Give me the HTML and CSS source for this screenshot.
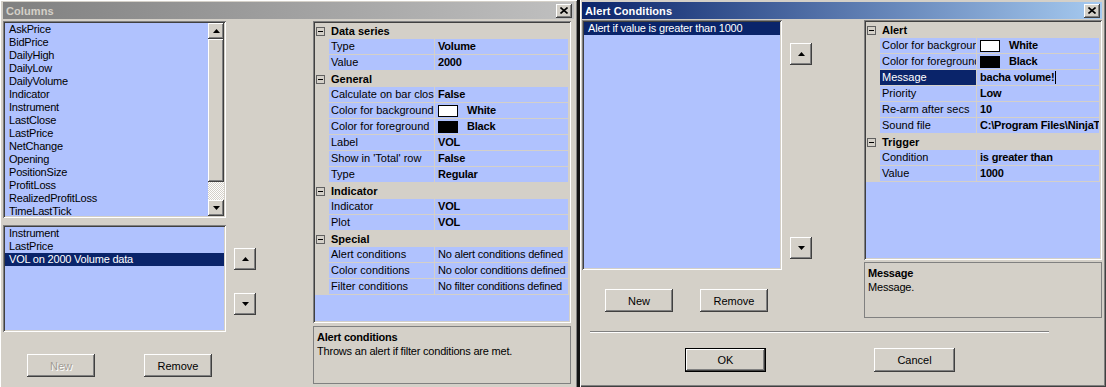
FILE: index.html
```html
<!DOCTYPE html>
<html>
<head>
<meta charset="utf-8">
<link rel="stylesheet" href="styles.css">
</head>
<body>
<div class="screen">
  <div class="win win-left">
    <div class="titlebar inactive">
      <span class="title">Columns</span>
      <div class="close"><svg width="8" height="7" viewBox="0 0 8 7"><path d="M0.5 0.5 L7.5 6.5 M7.5 0.5 L0.5 6.5" stroke="#000" stroke-width="1.6"/></svg></div>
    </div>
    <div class="body-left">
      <div class="col-lists">
        <div class="listbox list-top">
          <ul class="items">
            <li>AskPrice</li><li>BidPrice</li><li>DailyHigh</li><li>DailyLow</li><li>DailyVolume</li>
            <li>Indicator</li><li>Instrument</li><li>LastClose</li><li>LastPrice</li><li>NetChange</li>
            <li>Opening</li><li>PositionSize</li><li>ProfitLoss</li><li>RealizedProfitLoss</li><li>TimeLastTick</li>
          </ul>
          <div class="vscroll">
            <div class="sbtn"><svg width="7" height="4" viewBox="0 0 7 4"><path d="M3.5 0 L7 4 L0 4 Z" fill="#000"/></svg></div>
            <div class="thumb"></div>
            <div class="track"></div>
            <div class="sbtn"><svg width="7" height="4" viewBox="0 0 7 4"><path d="M0 0 L7 0 L3.5 4 Z" fill="#000"/></svg></div>
          </div>
        </div>
        <div class="listbox list-bottom">
          <ul class="items">
            <li>Instrument</li><li>LastPrice</li><li class="sel">VOL on 2000 Volume data</li>
          </ul>
        </div>
        <div class="btn-row left-btns">
          <div class="btn disabled">New</div>
          <div class="btn">Remove</div>
        </div>
      </div>
      <div class="arrows left-arrows">
        <div class="arrow up"><svg width="7" height="4" viewBox="0 0 7 4"><path d="M3.5 0 L7 4 L0 4 Z" fill="#000"/></svg></div>
        <div class="arrow down"><svg width="7" height="4" viewBox="0 0 7 4"><path d="M0 0 L7 0 L3.5 4 Z" fill="#000"/></svg></div>
      </div>
      <div class="gridcol left-gridcol">
        <div class="pgrid left-grid">
          <div class="pcat"><span class="exp"></span><span>Data series</span></div>
          <div class="prow"><i></i><div class="n">Type</div><div class="v b">Volume</div></div>
          <div class="prow"><i></i><div class="n">Value</div><div class="v b">2000</div></div>
          <div class="pcat"><span class="exp"></span><span>General</span></div>
          <div class="prow"><i></i><div class="n">Calculate on bar close</div><div class="v b">False</div></div>
          <div class="prow"><i></i><div class="n">Color for background</div><div class="v b"><span class="swatch white"></span><span class="swtxt">White</span></div></div>
          <div class="prow"><i></i><div class="n">Color for foreground</div><div class="v b"><span class="swatch black"></span><span class="swtxt">Black</span></div></div>
          <div class="prow"><i></i><div class="n">Label</div><div class="v b">VOL</div></div>
          <div class="prow"><i></i><div class="n">Show in 'Total' row</div><div class="v b">False</div></div>
          <div class="prow"><i></i><div class="n">Type</div><div class="v b">Regular</div></div>
          <div class="pcat"><span class="exp"></span><span>Indicator</span></div>
          <div class="prow"><i></i><div class="n">Indicator</div><div class="v b">VOL</div></div>
          <div class="prow"><i></i><div class="n">Plot</div><div class="v b">VOL</div></div>
          <div class="pcat"><span class="exp"></span><span>Special</span></div>
          <div class="prow"><i></i><div class="n">Alert conditions</div><div class="v">No alert conditions defined</div></div>
          <div class="prow"><i></i><div class="n">Color conditions</div><div class="v">No color conditions defined</div></div>
          <div class="prow"><i></i><div class="n">Filter conditions</div><div class="v">No filter conditions defined</div></div>
        </div>
        <div class="desc left-desc">
          <div class="dtitle">Alert conditions</div>
          <div>Throws an alert if filter conditions are met.</div>
        </div>
      </div>
    </div>
  </div>
  <div class="divider"></div>
  <div class="win win-right">
    <div class="titlebar active">
      <span class="title">Alert Conditions</span>
      <div class="close"><svg width="8" height="7" viewBox="0 0 8 7"><path d="M0.5 0.5 L7.5 6.5 M7.5 0.5 L0.5 6.5" stroke="#000" stroke-width="1.6"/></svg></div>
    </div>
    <div class="body-right">
      <div class="rtop">
        <div class="rcol1">
          <div class="listbox rlist">
            <ul class="items">
              <li class="sel">Alert if value is greater than 1000</li>
            </ul>
          </div>
          <div class="btn-row right-btns">
            <div class="btn">New</div>
            <div class="btn">Remove</div>
          </div>
        </div>
        <div class="arrows right-arrows">
          <div class="arrow up"><svg width="7" height="4" viewBox="0 0 7 4"><path d="M3.5 0 L7 4 L0 4 Z" fill="#000"/></svg></div>
          <div class="arrow down"><svg width="7" height="4" viewBox="0 0 7 4"><path d="M0 0 L7 0 L3.5 4 Z" fill="#000"/></svg></div>
        </div>
        <div class="gridcol right-gridcol">
          <div class="pgrid right-grid">
            <div class="pcat"><span class="exp"></span><span>Alert</span></div>
            <div class="prow"><i></i><div class="n">Color for background</div><div class="v b"><span class="swatch white"></span><span class="swtxt">White</span></div></div>
            <div class="prow"><i></i><div class="n">Color for foreground</div><div class="v b"><span class="swatch black"></span><span class="swtxt">Black</span></div></div>
            <div class="prow"><i></i><div class="n selname">Message</div><div class="v b">bacha volume!<span class="caret"></span></div></div>
            <div class="prow"><i></i><div class="n">Priority</div><div class="v b">Low</div></div>
            <div class="prow"><i></i><div class="n">Re-arm after secs</div><div class="v b">10</div></div>
            <div class="prow"><i></i><div class="n">Sound file</div><div class="v b">C:\Program Files\NinjaTrader 6\sounds\Alert1.wav</div></div>
            <div class="pcat"><span class="exp"></span><span>Trigger</span></div>
            <div class="prow"><i></i><div class="n">Condition</div><div class="v b">is greater than</div></div>
            <div class="prow"><i></i><div class="n">Value</div><div class="v b">1000</div></div>
          </div>
          <div class="desc right-desc">
            <div class="dtitle">Message</div>
            <div>Message.</div>
          </div>
        </div>
      </div>
      <div class="sep"></div>
      <div class="okrow">
        <div class="btn wide default">OK</div>
        <div class="btn wide">Cancel</div>
      </div>
    </div>
  </div>
</div>
</body>
</html>
```

FILE: styles.css
```css
* { box-sizing: border-box; margin: 0; padding: 0; }
body {
  margin: 0;
  width: 1106px;
  height: 387px;
  overflow: hidden;
  font-family: "Liberation Sans", Arial, sans-serif;
  font-size: 11px;
  color: #000;
  background: #000;
}
ul { list-style: none; }
.screen { display: flex; height: 387px; }

.win {
  background: #d4d0c8;
  height: 387px;
  display: flex;
  flex-direction: column;
}
.win-left {
  width: 577px;
  padding: 2px 3px 0 3px;
  box-shadow: inset 1px 1px #ffffff, inset -1px 0 #808080;
}
.divider { width: 3px; background: #141414; }
.win-right {
  width: 526px;
  padding: 2px 4px 0 2px;
  box-shadow: inset 1px 0 #ffffff, inset -1px -1px #404040, inset -2px -2px #808080;
}

.titlebar {
  height: 17px;
  display: flex;
  align-items: center;
  justify-content: space-between;
  padding: 0 2px 0 3px;
  font-weight: bold;
  font-size: 11px;
  flex: none;
}
.titlebar.inactive { background: linear-gradient(to right, #808080, #c0c0c0); color: #d4d0c8; }
.titlebar.active { background: linear-gradient(to right, #0a246a, #a6caf0); color: #ffffff; }
.titlebar .title { letter-spacing: 0.1px; }
.close {
  width: 16px;
  height: 14px;
  background: #d4d0c8;
  display: flex;
  align-items: center;
  justify-content: center;
  box-shadow: inset -1px -1px #404040, inset 1px 1px #ffffff, inset -2px -2px #808080;
}

/* raised / sunken */
.btn, .arrow, .sbtn, .thumb {
  background: #d4d0c8;
  box-shadow: inset -1px -1px #404040, inset 1px 1px #ffffff, inset -2px -2px #808080, inset 2px 2px #d4d0c8;
}
.listbox {
  background: #b0c2fe;
  padding: 2px;
  box-shadow: inset 1px 1px #808080, inset -1px -1px #ffffff, inset 2px 2px #404040, inset -2px -2px #d4d0c8;
}
.items li {
  height: 13px;
  line-height: 13px;
  padding-left: 4px;
  white-space: nowrap;
  letter-spacing: -0.2px;
}
.items li.sel { background: #0a246a; color: #ffffff; }

/* left window */
.body-left { display: flex; margin-top: 2px; flex: 1; }
.col-lists { width: 223px; display: flex; flex-direction: column; }
.list-top { height: 197px; display: flex; }
.list-top .items { flex: 1; }
.vscroll { width: 16px; display: flex; flex-direction: column; }
.sbtn { height: 16px; display: flex; align-items: center; justify-content: center; }
.thumb { height: 143px; }
.track {
  flex: 1;
  background-color: #d4d0c8;
  background-image: conic-gradient(#ffffff 25%, #d4d0c8 0 50%, #ffffff 0 75%, #d4d0c8 0);
  background-size: 2px 2px;
}
.list-bottom { height: 107px; margin-top: 7px; }

.btn-row { display: flex; }
.btn {
  width: 68px;
  height: 23px;
  display: flex;
  align-items: center;
  justify-content: center;
}
.btn.disabled { color: #a09c94; text-shadow: 1px 1px #ffffff; }
.left-btns { margin-top: 22px; }
.left-btns .btn:first-child { margin-left: 24px; }
.left-btns .btn + .btn { margin-left: 49px; }

.arrows { width: 22px; margin-left: 8px; display: flex; flex-direction: column; flex: none; }
.arrow { width: 22px; height: 22px; display: flex; align-items: center; justify-content: center; }
.left-arrows .up { margin-top: 227px; }
.left-arrows .down { margin-top: 23px; }

.gridcol { display: flex; flex-direction: column; flex: none; }
.left-gridcol { width: 258px; margin-left: 57px; }

.pgrid {
  background: #b0c2fe;
  padding: 2px;
  overflow: hidden;
  box-shadow: inset 1px 1px #808080, inset -1px -1px #ffffff, inset 2px 2px #404040, inset -2px -2px #d4d0c8;
}
.left-grid { height: 302px; }
.pcat {
  height: 16px;
  display: flex;
  align-items: center;
  background: #d4d0c8;
  font-weight: bold;
}
.exp {
  width: 9px;
  height: 9px;
  margin-left: 1px;
  margin-right: 6px;
  border: 1px solid #606060;
  position: relative;
  flex: none;
}
.exp::after {
  content: "";
  position: absolute;
  left: 1px;
  top: 3px;
  width: 5px;
  height: 1px;
  background: #000;
}
.prow {
  display: grid;
  grid-template-columns: 13px 105px 1fr;
  column-gap: 1px;
  height: 16px;
  padding-bottom: 1px;
  padding-right: 1px;
  background: #d4d0c8;
}
.right-grid .prow { grid-template-columns: 13px 96px 1fr; }
.prow .n, .prow .v {
  background: #b0c2fe;
  line-height: 15px;
  white-space: nowrap;
  overflow: hidden;
}
.prow .n { padding-left: 2px; }
.prow .v { padding-left: 3px; display: flex; align-items: center; letter-spacing: -0.2px; }
.prow .v.b { font-weight: bold; }
.prow .n.selname { background: #0a246a; color: #ffffff; }
.swatch { width: 20px; height: 12px; border: 1px solid #000; flex: none; }
.swatch.white { background: #ffffff; }
.swatch.black { background: #000000; }
.swtxt { margin-left: 9px; }
.caret { width: 1px; height: 13px; background: #000; margin-left: 1px; flex: none; }

.desc {
  border: 1px solid #808080;
  padding: 3px 3px;
  line-height: 14px;
  letter-spacing: -0.2px;
}
.dtitle { font-weight: bold; }
.left-desc { height: 58px; margin-top: 3px; }

/* right window */
.body-right { display: flex; flex-direction: column; margin-top: 1px; flex: 1; }
.rtop { display: flex; }
.rcol1 { width: 200px; display: flex; flex-direction: column; flex: none; }
.rlist { height: 250px; }
.right-btns { margin-top: 19px; }
.right-btns .btn:first-child { margin-left: 23px; }
.right-btns .btn + .btn { margin-left: 27px; }
.right-arrows .up { margin-top: 23px; }
.right-arrows .down { margin-top: 172px; }
.right-gridcol { width: 238px; margin-left: 52px; }
.right-grid { height: 240px; }
.right-desc { height: 56px; margin-top: 2px; }

.sep {
  width: 459px;
  height: 2px;
  margin: 13px 0 0 8px;
  border-top: 1px solid #808080;
  border-bottom: 1px solid #ffffff;
}
.okrow { display: flex; margin-top: 15px; }
.btn.wide { width: 81px; height: 24px; }
.okrow .btn:first-child { margin-left: 103px; }
.okrow .btn + .btn { margin-left: 108px; }
.btn.default {
  box-shadow: inset 0 0 0 1px #000000, inset -2px -2px #404040, inset 2px 2px #ffffff, inset -3px -3px #808080;
}
```
